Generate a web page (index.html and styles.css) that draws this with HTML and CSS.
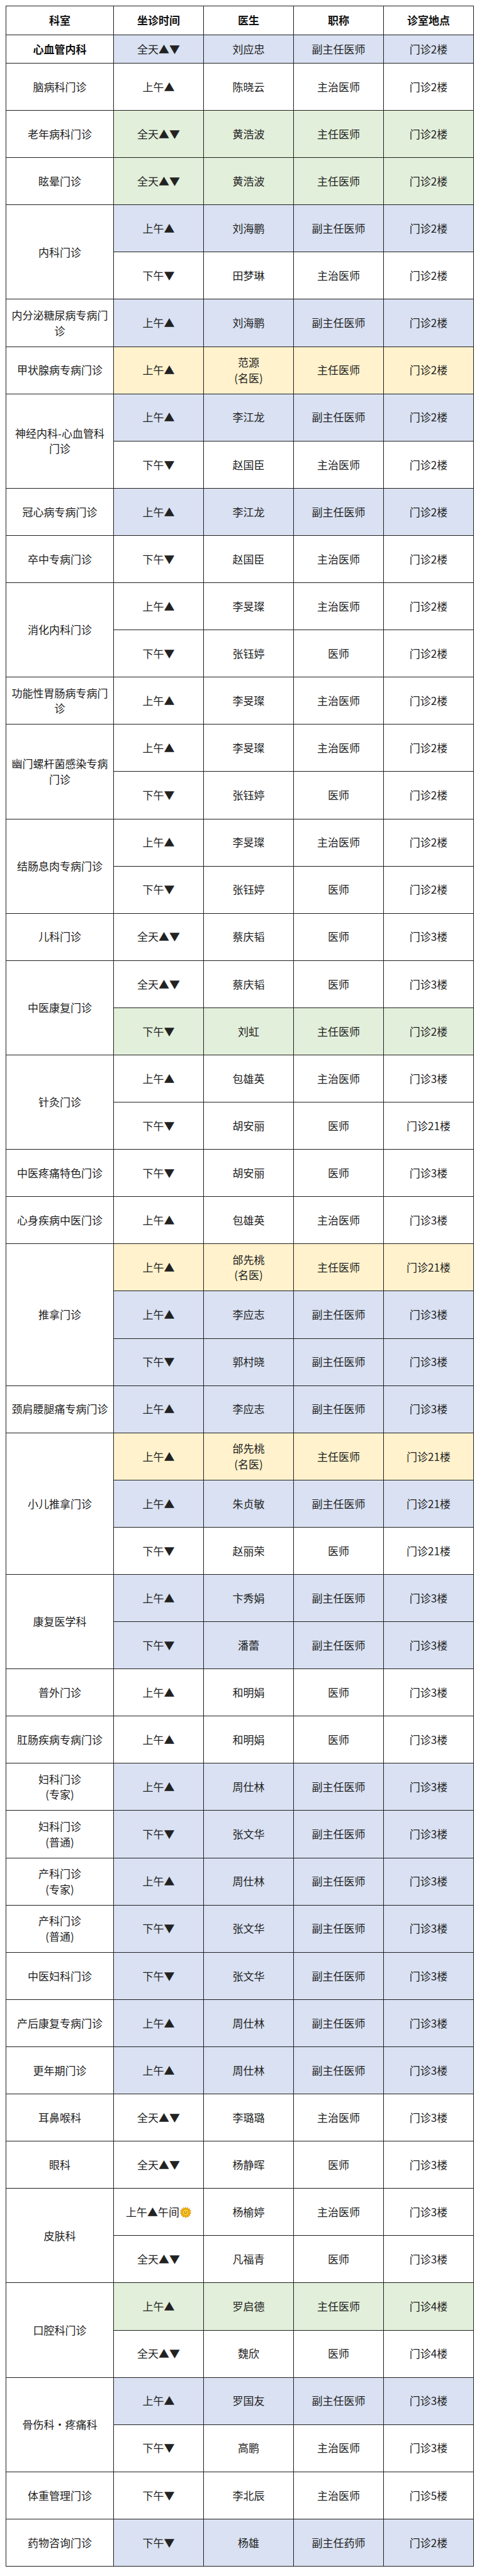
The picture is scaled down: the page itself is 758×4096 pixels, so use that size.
FILE: index.html
```html
<!DOCTYPE html>
<html lang="zh-CN">
<head>
<meta charset="utf-8">
<title>门诊坐诊安排</title>
<link rel="stylesheet" href="styles.css">
</head>
<body>
<table class="schedule">
  <colgroup>
    <col class="col-dept">
    <col class="col-std">
    <col class="col-std">
    <col class="col-std">
    <col class="col-std">
  </colgroup>
  <thead>
    <tr class="hd"><th>科室</th><th>坐诊时间</th><th>医生</th><th>职称</th><th>诊室地点</th></tr>
  </thead>
  <tbody>
    <tr class="short b"><td class="dept strong">心血管内科</td><td>全天▲▼</td><td>刘应忠</td><td>副主任医师</td><td>门诊2楼</td></tr>
    <tr class="r"><td class="dept">脑病科门诊</td><td>上午▲</td><td>陈晓云</td><td>主治医师</td><td>门诊2楼</td></tr>
    <tr class="r g"><td class="dept">老年病科门诊</td><td>全天▲▼</td><td>黄浩波</td><td>主任医师</td><td>门诊2楼</td></tr>
    <tr class="r g"><td class="dept">眩晕门诊</td><td>全天▲▼</td><td>黄浩波</td><td>主任医师</td><td>门诊2楼</td></tr>
    <tr class="r b"><td class="dept" rowspan="2">内科门诊</td><td>上午▲</td><td>刘海鹏</td><td>副主任医师</td><td>门诊2楼</td></tr>
    <tr class="r"><td>下午▼</td><td>田梦琳</td><td>主治医师</td><td>门诊2楼</td></tr>
    <tr class="r b"><td class="dept">内分泌糖尿病专病门诊</td><td>上午▲</td><td>刘海鹏</td><td>副主任医师</td><td>门诊2楼</td></tr>
    <tr class="r y"><td class="dept">甲状腺病专病门诊</td><td>上午▲</td><td>范源<br>(名医)</td><td>主任医师</td><td>门诊2楼</td></tr>
    <tr class="r b"><td class="dept" rowspan="2">神经内科-心血管科门诊</td><td>上午▲</td><td>李江龙</td><td>副主任医师</td><td>门诊2楼</td></tr>
    <tr class="r"><td>下午▼</td><td>赵国臣</td><td>主治医师</td><td>门诊2楼</td></tr>
    <tr class="r b"><td class="dept">冠心病专病门诊</td><td>上午▲</td><td>李江龙</td><td>副主任医师</td><td>门诊2楼</td></tr>
    <tr class="r"><td class="dept">卒中专病门诊</td><td>下午▼</td><td>赵国臣</td><td>主治医师</td><td>门诊2楼</td></tr>
    <tr class="r"><td class="dept" rowspan="2">消化内科门诊</td><td>上午▲</td><td>李旻璨</td><td>主治医师</td><td>门诊2楼</td></tr>
    <tr class="r"><td>下午▼</td><td>张钰婷</td><td>医师</td><td>门诊2楼</td></tr>
    <tr class="r"><td class="dept">功能性胃肠病专病门诊</td><td>上午▲</td><td>李旻璨</td><td>主治医师</td><td>门诊2楼</td></tr>
    <tr class="r"><td class="dept" rowspan="2">幽门螺杆菌感染专病门诊</td><td>上午▲</td><td>李旻璨</td><td>主治医师</td><td>门诊2楼</td></tr>
    <tr class="r"><td>下午▼</td><td>张钰婷</td><td>医师</td><td>门诊2楼</td></tr>
    <tr class="r"><td class="dept" rowspan="2">结肠息肉专病门诊</td><td>上午▲</td><td>李旻璨</td><td>主治医师</td><td>门诊2楼</td></tr>
    <tr class="r"><td>下午▼</td><td>张钰婷</td><td>医师</td><td>门诊2楼</td></tr>
    <tr class="r"><td class="dept">儿科门诊</td><td>全天▲▼</td><td>蔡庆韬</td><td>医师</td><td>门诊3楼</td></tr>
    <tr class="r"><td class="dept" rowspan="2">中医康复门诊</td><td>全天▲▼</td><td>蔡庆韬</td><td>医师</td><td>门诊3楼</td></tr>
    <tr class="r g"><td>下午▼</td><td>刘虹</td><td>主任医师</td><td>门诊2楼</td></tr>
    <tr class="r"><td class="dept" rowspan="2">针灸门诊</td><td>上午▲</td><td>包雄英</td><td>主治医师</td><td>门诊3楼</td></tr>
    <tr class="r"><td>下午▼</td><td>胡安丽</td><td>医师</td><td>门诊21楼</td></tr>
    <tr class="r"><td class="dept">中医疼痛特色门诊</td><td>下午▼</td><td>胡安丽</td><td>医师</td><td>门诊3楼</td></tr>
    <tr class="r"><td class="dept">心身疾病中医门诊</td><td>上午▲</td><td>包雄英</td><td>主治医师</td><td>门诊3楼</td></tr>
    <tr class="r y"><td class="dept" rowspan="3">推拿门诊</td><td>上午▲</td><td>邰先桃<br>(名医)</td><td>主任医师</td><td>门诊21楼</td></tr>
    <tr class="r b"><td>上午▲</td><td>李应志</td><td>副主任医师</td><td>门诊3楼</td></tr>
    <tr class="r b"><td>下午▼</td><td>郭村晓</td><td>副主任医师</td><td>门诊3楼</td></tr>
    <tr class="r b"><td class="dept">颈肩腰腿痛专病门诊</td><td>上午▲</td><td>李应志</td><td>副主任医师</td><td>门诊3楼</td></tr>
    <tr class="r y"><td class="dept" rowspan="3">小儿推拿门诊</td><td>上午▲</td><td>邰先桃<br>(名医)</td><td>主任医师</td><td>门诊21楼</td></tr>
    <tr class="r b"><td>上午▲</td><td>朱贞敏</td><td>副主任医师</td><td>门诊21楼</td></tr>
    <tr class="r"><td>下午▼</td><td>赵丽荣</td><td>医师</td><td>门诊21楼</td></tr>
    <tr class="r b"><td class="dept" rowspan="2">康复医学科</td><td>上午▲</td><td>卞秀娟</td><td>副主任医师</td><td>门诊3楼</td></tr>
    <tr class="r b"><td>下午▼</td><td>潘蕾</td><td>副主任医师</td><td>门诊3楼</td></tr>
    <tr class="r"><td class="dept">普外门诊</td><td>上午▲</td><td>和明娟</td><td>医师</td><td>门诊3楼</td></tr>
    <tr class="r"><td class="dept">肛肠疾病专病门诊</td><td>上午▲</td><td>和明娟</td><td>医师</td><td>门诊3楼</td></tr>
    <tr class="r b"><td class="dept">妇科门诊<br>(专家)</td><td>上午▲</td><td>周仕林</td><td>副主任医师</td><td>门诊3楼</td></tr>
    <tr class="r b"><td class="dept">妇科门诊<br>(普通)</td><td>下午▼</td><td>张文华</td><td>副主任医师</td><td>门诊3楼</td></tr>
    <tr class="r b"><td class="dept">产科门诊<br>(专家)</td><td>上午▲</td><td>周仕林</td><td>副主任医师</td><td>门诊3楼</td></tr>
    <tr class="r b"><td class="dept">产科门诊<br>(普通)</td><td>下午▼</td><td>张文华</td><td>副主任医师</td><td>门诊3楼</td></tr>
    <tr class="r b"><td class="dept">中医妇科门诊</td><td>下午▼</td><td>张文华</td><td>副主任医师</td><td>门诊3楼</td></tr>
    <tr class="r b"><td class="dept">产后康复专病门诊</td><td>上午▲</td><td>周仕林</td><td>副主任医师</td><td>门诊3楼</td></tr>
    <tr class="r b"><td class="dept">更年期门诊</td><td>上午▲</td><td>周仕林</td><td>副主任医师</td><td>门诊3楼</td></tr>
    <tr class="r"><td class="dept">耳鼻喉科</td><td>全天▲▼</td><td>李璐璐</td><td>主治医师</td><td>门诊3楼</td></tr>
    <tr class="r"><td class="dept">眼科</td><td>全天▲▼</td><td>杨静晖</td><td>医师</td><td>门诊3楼</td></tr>
    <tr class="r"><td class="dept" rowspan="2">皮肤科</td><td class="tight">上午▲午间<svg class="sun" viewBox="0 0 24 24" aria-hidden="true"><polygon points="12,0.5 13.6,4 16.4,1.4 16.8,5.2 20.5,3.8 19.6,7.5 23.4,7.8 21,10.8 23.5,13.5 20,14.8 21.6,18.3 17.8,18.1 17.6,22 14.4,19.9 12,23.5 9.6,19.9 6.4,22 6.2,18.1 2.4,18.3 4,14.8 0.5,13.5 3,10.8 0.6,7.8 4.4,7.5 3.5,3.8 7.2,5.2 7.6,1.4 10.4,4" fill="#f5b400" stroke="#c77800" stroke-width="0.8" stroke-linejoin="round"/><circle cx="12" cy="12" r="6.3" fill="#ffd43b" stroke="#c77800" stroke-width="0.6"/><circle cx="9.8" cy="10.6" r="0.9" fill="#5a3300"/><circle cx="14.2" cy="10.6" r="0.9" fill="#5a3300"/><path d="M9.2 13.4 Q12 16.2 14.8 13.4" fill="none" stroke="#5a3300" stroke-width="0.9" stroke-linecap="round"/></svg></td><td>杨榆婷</td><td>主治医师</td><td>门诊3楼</td></tr>
    <tr class="r"><td>全天▲▼</td><td>凡福青</td><td>医师</td><td>门诊3楼</td></tr>
    <tr class="r g"><td class="dept" rowspan="2">口腔科门诊</td><td>上午▲</td><td>罗启德</td><td>主任医师</td><td>门诊4楼</td></tr>
    <tr class="r"><td>全天▲▼</td><td>魏欣</td><td>医师</td><td>门诊4楼</td></tr>
    <tr class="r b"><td class="dept" rowspan="2">骨伤科·疼痛科</td><td>上午▲</td><td>罗国友</td><td>副主任医师</td><td>门诊3楼</td></tr>
    <tr class="r"><td>下午▼</td><td>高鹏</td><td>主治医师</td><td>门诊3楼</td></tr>
    <tr class="r"><td class="dept">体重管理门诊</td><td>下午▼</td><td>李北辰</td><td>主治医师</td><td>门诊5楼</td></tr>
    <tr class="r b"><td class="dept">药物咨询门诊</td><td>下午▼</td><td>杨雄</td><td>副主任药师</td><td>门诊2楼</td></tr>
  </tbody>
</table>
</body>
</html>
```
FILE: styles.css
```css
html, body {
  margin: 0;
  padding: 0;
  background: #ffffff;
}

body {
  font-family: "Noto Sans CJK SC", "Noto Sans", sans-serif;
  color: #222222;
}

.schedule {
  border-collapse: collapse;
  table-layout: fixed;
  width: 743px;
  margin: 9px 0 0 9px;
}

.col-dept { width: 171px; }
.col-std { width: 143px; }

.schedule th,
.schedule td {
  border: 1px solid #1e1e1e;
  text-align: center;
  vertical-align: middle;
  padding: 0 6px;
  font-size: 17px;
  line-height: 24.5px;
  font-weight: 400;
  color: #222222;
  background: #ffffff;
}

.schedule th {
  font-weight: 700;
  color: #111111;
}

.hd { height: 45.5px; }
.short { height: 45.5px; }
.r { height: 75.1px; }

.schedule td.strong { font-weight: 700; color: #111111; }

.b td { background: #d9e1f2; }
.g td { background: #e2efda; }
.y td { background: #fff2cc; }

.schedule td.dept { background: #ffffff; }

.schedule td.tight { padding: 0 2px; white-space: nowrap; }

.sun {
  width: 18px;
  height: 18px;
  vertical-align: -3px;
  margin-left: 1px;
}
```
